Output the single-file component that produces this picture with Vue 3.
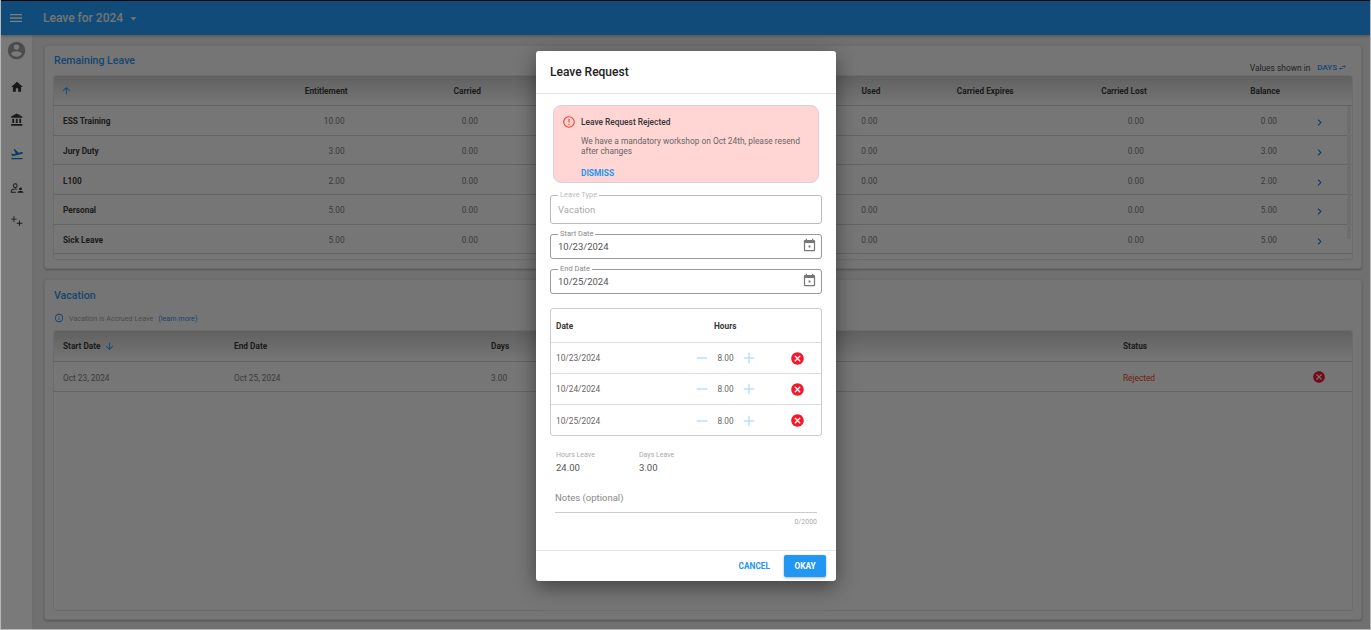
<script setup>
const icons = {
  menu: 'M3,6H21V8H3V6M3,11H21V13H3V11M3,16H21V18H3V16Z',
  account: 'M12,19.2C9.5,19.2 7.29,17.92 6,16C6.03,14 10,12.9 12,12.9C14,12.9 17.97,14 18,16C16.71,17.92 14.5,19.2 12,19.2M12,5A3,3 0 0,1 15,8A3,3 0 0,1 12,11A3,3 0 0,1 9,8A3,3 0 0,1 12,5M12,2A10,10 0 0,0 2,12A10,10 0 0,0 12,22A10,10 0 0,0 22,12C22,6.47 17.5,2 12,2Z',
  home: 'M10,20V14H14V20H19V12H22L12,3L2,12H5V20H10Z',
  bank: 'M11.5,1L2,6V8H21V6M16,10V17H19V10M2,22H21V19H2M10,10V17H13V10M4,10V17H7V10H4Z',
  plane: 'M2.5,19H21.5V21H2.5V19M22.07,9.64C21.86,8.84 21.03,8.36 20.23,8.58L14.92,10L8,3.57L6.09,4.08L10.23,11.25L5.26,12.58L3.29,11.04L1.84,11.43L3.66,14.59L4.43,15.92L6.03,15.5L11.34,14.07L15.69,12.91L21,11.5C21.81,11.26 22.28,10.44 22.07,9.64Z',
  up: 'M13,20H11V8L5.5,13.5L4.08,12.08L12,4.16L19.92,12.08L18.5,13.5L13,8V20Z',
  down: 'M11,4H13V16L18.5,10.5L19.92,11.92L12,19.84L4.08,11.92L5.5,10.5L11,16V4Z',
  chevron: 'M8.59,16.58L13.17,12L8.59,7.41L10,6L16,12L10,18L8.59,16.58Z',
  close: 'M12,2C17.53,2 22,6.47 22,12C22,17.53 17.53,22 12,22C6.47,22 2,17.53 2,12C2,6.47 6.47,2 12,2M15.59,7L12,10.59L8.41,7L7,8.41L10.59,12L7,15.59L8.41,17L12,13.41L15.59,17L17,15.59L13.41,12L17,8.41L15.59,7Z',
  alert: 'M11,15H13V17H11V15M11,7H13V13H11V7M12,2C6.47,2 2,6.5 2,12A10,10 0 0,0 12,22A10,10 0 0,0 22,12A10,10 0 0,0 12,2M12,20A8,8 0 0,1 4,12A8,8 0 0,1 12,4A8,8 0 0,1 20,12A8,8 0 0,1 12,20Z',
  calendar: 'M10.5,12H13.5V15H10.5M19,19H5V8H19M19,3H18V1H16V3H8V1H6V3H5C3.89,3 3,3.9 3,5V19A2,2 0 0,0 5,21H19A2,2 0 0,0 21,19V5A2,2 0 0,0 19,3Z',
  info: 'M11,9H13V7H11M12,20C7.59,20 4,16.41 4,12C4,7.59 7.59,4 12,4C16.41,4 20,7.59 20,12C20,16.41 16.41,20 12,20M12,2A10,10 0 0,0 2,12A10,10 0 0,0 12,22A10,10 0 0,0 22,12A10,10 0 0,0 12,2M11,17H13V11H11V17Z',
  caret: 'M7,10L12,15L17,10H7Z',
  plus: 'M19,13H13V19H11V13H5V11H11V5H13V11H19V13Z',
  minus: 'M19,13H5V11H19V13Z',
  swap: 'M21,9L17,5V8H10V10H17V13M7,11L3,15L7,19V16H14V14H7V11Z',
  people: 'M9,4A4,4 0 0,1 13,8A4,4 0 0,1 9,12A4,4 0 0,1 5,8A4,4 0 0,1 9,4M9,5.6A2.4,2.4 0 0,0 6.6,8A2.4,2.4 0 0,0 9,10.4A2.4,2.4 0 0,0 11.4,8A2.4,2.4 0 0,0 9,5.6M9,13C10,13 11.2,13.15 12.3,13.5L11.6,15C10.8,14.75 9.9,14.6 9,14.6C6.3,14.6 3.1,15.9 3,16.5V18.4H10V20H1.4V16.5C1.4,14.2 6.3,13 9,13M18,11A2.5,2.5 0 0,1 20.5,13.5A2.5,2.5 0 0,1 18,16A2.5,2.5 0 0,1 15.5,13.5A2.5,2.5 0 0,1 18,11M18,17C20.2,17 23,18 23,19V20H13V19C13,18 15.8,17 18,17Z',
  adjust: 'M6,4H7.5V8H11.5V9.5H7.5V13.5H6V9.5H2V8H6V4M15.5,11H17V15H21V16.5H17V20.5H15.5V16.5H11.5V15H15.5V11Z',
}

const navItems = [
  { icon: 'account', big: true },
  { icon: 'home' },
  { icon: 'bank' },
  { icon: 'plane', active: true },
  { icon: 'people' },
  { icon: 'adjust' },
]

// 中间两列被弹窗挡住了，留空
const leaveRows = [
  { name: 'ESS Training', vals: ['10.00', '0.00', '', '', '0.00', '', '0.00', '0.00'] },
  { name: 'Jury Duty', vals: ['3.00', '0.00', '', '', '0.00', '', '0.00', '3.00'] },
  { name: 'L100', vals: ['2.00', '0.00', '', '', '0.00', '', '0.00', '2.00'] },
  { name: 'Personal', vals: ['5.00', '0.00', '', '', '0.00', '', '0.00', '5.00'] },
  { name: 'Sick Leave', vals: ['5.00', '0.00', '', '', '0.00', '', '0.00', '5.00'] },
]
const leaveCols = ['Entitlement', 'Carried', '', '', 'Used', 'Carried Expires', 'Carried Lost', 'Balance']

const days = ['10/23/2024', '10/24/2024', '10/25/2024']
</script>

<template>
  <div class="page">
    <header class="topbar">
      <svg class="ic menu-ic" viewBox="0 0 24 24"><path :d="icons.menu" /></svg>
      <span class="top-title">Leave for 2024</span>
      <svg class="ic caret-ic" viewBox="0 0 24 24"><path :d="icons.caret" /></svg>
    </header>

    <div class="body">
      <nav class="rail">
        <svg
          v-for="n in navItems"
          :key="n.icon"
          class="ic nav-ic"
          :class="{ big: n.big, active: n.active }"
          viewBox="0 0 24 24"
        ><path :d="icons[n.icon]" /></svg>
      </nav>

      <main class="content">
        <section class="card card-top">
          <div class="card-head">
            <h2 class="card-title">Remaining Leave</h2>
            <div class="unit">
              Values shown in
              <span class="unit-val">DAYS<svg class="ic swap-ic" viewBox="0 0 24 24"><path :d="icons.swap" /></svg></span>
            </div>
          </div>
          <div class="table leave-table">
            <div class="thead leave-grid">
              <div class="cell"><svg class="ic sort-ic" viewBox="0 0 24 24"><path :d="icons.up" /></svg></div>
              <div v-for="(c, i) in leaveCols" :key="i" class="cell num">{{ c }}</div>
              <div class="cell"></div>
            </div>
            <div v-for="r in leaveRows" :key="r.name" class="row leave-grid">
              <div class="cell name">{{ r.name }}</div>
              <div v-for="(v, i) in r.vals" :key="i" class="cell num val">{{ v }}</div>
              <div class="cell chev"><svg class="ic chev-ic" viewBox="0 0 24 24"><path :d="icons.chevron" /></svg></div>
            </div>
            <div class="scrollbar"></div>
          </div>
        </section>

        <section class="card card-bottom">
          <h2 class="card-title vac-title">Vacation</h2>
          <div class="accrued">
            <svg class="ic info-ic" viewBox="0 0 24 24"><path :d="icons.info" /></svg>
            <span>Vacation is Accrued Leave</span>
            <a class="learn">(learn more)</a>
          </div>
          <div class="table vac-table">
            <div class="thead vac-grid">
              <div class="cell first">Start Date<svg class="ic sort-ic down" viewBox="0 0 24 24"><path :d="icons.down" /></svg></div>
              <div class="cell">End Date</div>
              <div class="cell">Days</div>
              <div class="cell">Status</div>
              <div class="cell"></div>
            </div>
            <div class="row vac-grid">
              <div class="cell first val">Oct 23, 2024</div>
              <div class="cell val">Oct 25, 2024</div>
              <div class="cell val">3.00</div>
              <div class="cell rejected">Rejected</div>
              <div class="cell"><svg class="ic del-ic" viewBox="0 0 24 24"><path :d="icons.close" /></svg></div>
            </div>
          </div>
        </section>
      </main>
    </div>

    <div class="overlay">
      <div class="dialog">
        <div class="dlg-title">Leave Request</div>
        <div class="dlg-body">
          <div class="alert">
            <svg class="ic alert-ic" viewBox="0 0 24 24"><path :d="icons.alert" /></svg>
            <div class="alert-main">
              <div class="alert-title">Leave Request Rejected</div>
              <div class="alert-text">We have a mandatory workshop on Oct 24th, please resend after changes</div>
              <div class="dismiss">DISMISS</div>
            </div>
          </div>

          <fieldset class="field disabled">
            <legend>Leave Type</legend>
            <span>Vacation</span>
          </fieldset>
          <fieldset class="field">
            <legend>Start Date</legend>
            <span>10/23/2024</span>
            <svg class="ic cal-ic" viewBox="0 0 24 24"><path :d="icons.calendar" /></svg>
          </fieldset>
          <fieldset class="field">
            <legend>End Date</legend>
            <span>10/25/2024</span>
            <svg class="ic cal-ic" viewBox="0 0 24 24"><path :d="icons.calendar" /></svg>
          </fieldset>

          <div class="hours-table">
            <div class="h-row h-head">
              <div class="h-date">Date</div>
              <div class="h-hours">Hours</div>
            </div>
            <div v-for="d in days" :key="d" class="h-row">
              <div class="h-date">{{ d }}</div>
              <div class="stepper">
                <svg class="ic step-ic" viewBox="0 0 24 24"><path :d="icons.minus" /></svg>
                <span class="h-val">8.00</span>
                <svg class="ic step-ic" viewBox="0 0 24 24"><path :d="icons.plus" /></svg>
              </div>
              <svg class="ic x-ic" viewBox="0 0 24 24"><path :d="icons.close" /></svg>
            </div>
          </div>

          <div class="totals">
            <div class="total t-hours">
              <div class="t-label">Hours Leave</div>
              <div class="t-val">24.00</div>
            </div>
            <div class="total">
              <div class="t-label">Days Leave</div>
              <div class="t-val">3.00</div>
            </div>
          </div>

          <div class="notes">Notes (optional)</div>
          <div class="counter">0/2000</div>
        </div>
        <div class="dlg-foot">
          <button class="btn-text">CANCEL</button>
          <button class="btn-ok">OKAY</button>
        </div>
      </div>
    </div>
  </div>
</template>

<style>
html,
body {
  margin: 0;
  background: #fff;
}
</style>

<style scoped>
.page {
  position: relative;
  width: 1371px;
  height: 630px;
  box-sizing: border-box;
  overflow: hidden;
  background: #e0e0e0;
  border: 1px solid #b8b8b8;
  border-top: none;
  font-family: Roboto, 'Liberation Sans', sans-serif;
  color: #212121;
  display: flex;
  flex-direction: column;
}
.ic {
  display: block;
  fill: currentColor;
  flex: none;
}
.topbar {
  height: 35px;
  flex: none;
  box-sizing: border-box;
  border-top: 1px solid #111;
  background: #2196f3;
  color: #fff;
  display: flex;
  align-items: center;
  padding-left: 7px;
  box-shadow: 0 1px 3px rgba(0, 0, 0, 0.3);
  position: relative;
}
.menu-ic {
  width: 16px;
  height: 16px;
}
.top-title {
  margin-left: 19px;
  font-size: 12px;
  font-weight: 500;
  color: #e8e8e8;
}
.caret-ic {
  width: 15px;
  height: 15px;
  margin-left: 3px;
  color: #e8e8e8;
}
.body {
  flex: 1;
  display: flex;
  min-height: 0;
}
.rail {
  width: 32px;
  flex: none;
  background: #f4f4f4;
  border-right: 1px solid #dcdcdc;
  box-sizing: border-box;
  display: flex;
  flex-direction: column;
  align-items: center;
  padding-top: 5px;
  gap: 19.7px;
  color: #333;
}
.nav-ic {
  width: 14px;
  height: 14px;
}
.nav-ic.big {
  width: 21px;
  height: 21px;
  color: #999;
  margin-bottom: -1px;
}
.nav-ic.active {
  color: #1976d2;
}
.content {
  flex: 1;
  padding: 10px 8px 9px 11px;
  display: flex;
  flex-direction: column;
  gap: 10px;
  min-width: 0;
}
.card {
  background: #ebebeb;
  border: 1px solid #d8d8d8;
  border-radius: 3px;
  box-shadow: 0 1px 2px rgba(0, 0, 0, 0.25);
  box-sizing: border-box;
  padding: 0 8px 8px;
}
.card-top {
  height: 224px;
}
.card-bottom {
  flex: 1;
}
.card-head {
  height: 29px;
  display: flex;
  justify-content: space-between;
}
.card-title {
  margin: 0;
  font-size: 10.6px;
  font-weight: 500;
  color: #2a8ae0;
  padding: 8px 0 0 1px;
  line-height: 13px;
}
.unit {
  font-size: 8.4px;
  color: #444;
  align-self: flex-end;
  line-height: 10px;
  margin-bottom: 2.5px;
  margin-right: 6px;
  display: flex;
  gap: 7px;
}
.unit-val {
  color: #2a8ae0;
  font-weight: 500;
  font-size: 8px;
  display: flex;
  align-items: center;
  gap: 1px;
}
.swap-ic {
  width: 9px;
  height: 9px;
}
.table {
  position: relative;
  border: 1px solid #d8d8d8;
  border-radius: 3px;
  box-sizing: border-box;
  background: #ececec;
  overflow: hidden;
}
.leave-table {
  height: 185px;
}
.scrollbar {
  position: absolute;
  right: 1px;
  top: 30px;
  width: 4px;
  height: 133px;
  background: #dcdcdc;
}
.thead {
  height: 30px;
  background: linear-gradient(#c2c2c2, #ececec);
  border-bottom: 1px solid #c4c4c4;
  box-sizing: border-box;
  font-size: 8.3px;
  font-weight: 700;
  color: #383838;
}
.row {
  height: 29.7px;
  box-sizing: border-box;
  padding-top: 2px;
  border-bottom: 1px solid #c8c8c8;
  font-size: 8.3px;
}
.leave-grid {
  display: grid;
  grid-template-columns: 160.5px repeat(8, 133.2px) 1fr;
  align-items: center;
}
.leave-grid .cell:first-child {
  padding-left: 7px;
}
.leave-grid .cell.name {
  padding-left: 9px;
  font-weight: 700;
  color: #383838;
}
.cell.num {
  text-align: right;
}
.cell.val {
  color: #777;
}
.cell.num.val {
  padding-right: 3px;
}
.chev {
  display: flex;
  padding-left: 33px;
}
.chev-ic {
  width: 13px;
  height: 13px;
  color: #1976d2;
  margin-top: 3px;
}
.sort-ic {
  width: 11px;
  height: 11px;
  color: #2196f3;
}
.sort-ic.down {
  margin-left: 3px;
}
.vac-title {
  padding-top: 9px;
}
.accrued {
  display: flex;
  align-items: center;
  height: 14px;
  margin-top: 9px;
  font-size: 7.2px;
  color: #999;
  gap: 5px;
}
.info-ic {
  width: 10px;
  height: 10px;
  color: #2a8ae0;
  margin-left: 1px;
}
.learn {
  color: #2a8ae0;
}
.vac-table {
  height: 281px;
  margin-top: 5px;
}
.vac-table .thead {
  height: 31px;
}
.vac-table .row {
  height: 30px;
}
.vac-grid {
  display: grid;
  grid-template-columns: 180px 257px 632px 189px 1fr;
  align-items: center;
}
.vac-grid .first {
  padding-left: 9px;
  display: flex;
  align-items: center;
}
.rejected {
  color: #e53935;
}
.del-ic {
  width: 14px;
  height: 14px;
  color: #e8192c;
  margin-top: -2px;
}
.overlay {
  position: absolute;
  inset: 0;
  background: rgba(0, 0, 0, 0.5);
}
.dialog {
  position: absolute;
  left: 535px;
  top: 51px;
  width: 300px;
  height: 530px;
  background: #fff;
  border-radius: 3px;
  box-shadow: 0 6px 20px rgba(0, 0, 0, 0.45);
  display: flex;
  flex-direction: column;
}
.dlg-title {
  height: 42.5px;
  flex: none;
  box-sizing: border-box;
  border-bottom: 1px solid #e6e6e6;
  padding: 13px 14px 0;
  font-size: 12px;
  line-height: 16px;
  font-weight: 500;
}
.dlg-body {
  flex: 1;
  padding: 11.5px 14px 0;
  min-height: 0;
}
.alert {
  margin: 0 3px;
  height: 78px;
  box-sizing: border-box;
  background: #ffd6d3;
  border: 1px solid #d8d2dc;
  border-radius: 8px;
  display: flex;
  padding: 9px 8px;
  gap: 5px;
  font-size: 8.35px;
  line-height: 10px;
}
.alert-ic {
  width: 14px;
  height: 14px;
  color: #f44336;
}
.alert-title {
  font-weight: 500;
  color: #333;
  margin-top: 2px;
}
.alert-text {
  color: #666;
  margin-top: 9px;
}
.dismiss {
  color: #2196f3;
  font-weight: 700;
  margin-top: 12px;
}
.field {
  margin: 4px 0 0;
  padding: 0 4px 0 7px;
  min-inline-size: 0;
  height: 29px;
  box-sizing: border-box;
  border: 1px solid #999;
  border-radius: 3px;
  display: flex;
  align-items: center;
  justify-content: space-between;
  font-size: 9.5px;
  color: #555;
}
.field + .field {
  margin-top: 6px;
}
.field legend {
  font-size: 7.5px;
  line-height: 8px;
  color: #888;
  padding: 0 2px;
}
.field span {
  margin-bottom: 4px;
}
.field.disabled {
  margin-top: 8px;
  height: 33px;
  border-color: #bbb;
  color: #aaa;
}
.field.disabled legend {
  color: #bbb;
}
.cal-ic {
  width: 15px;
  height: 15px;
  color: #777;
  margin-bottom: 5px;
}
.hours-table {
  margin-top: 14px;
  border: 1px solid #ccc;
  border-radius: 3px;
  box-sizing: border-box;
  height: 128px;
}
.h-row {
  height: 31px;
  box-sizing: border-box;
  border-bottom: 1px solid #ddd;
  display: flex;
  align-items: center;
  font-size: 8.3px;
  color: #666;
  padding-left: 5px;
}
.h-row:last-child {
  border-bottom: none;
}
.h-head {
  height: 34px;
  font-weight: 700;
  color: #383838;
}
.h-date {
  width: 137px;
}
.h-hours {
  margin-left: 21px;
}
.stepper {
  width: 65px;
  display: flex;
  align-items: center;
  justify-content: space-between;
  color: #bbdefb;
}
.h-val {
  color: #666;
}
.step-ic {
  width: 18px;
  height: 18px;
}
.x-ic {
  width: 15px;
  height: 15px;
  color: #f01a2c;
  margin-left: 31.5px;
}
.totals {
  display: flex;
  margin-top: 14px;
  padding-left: 6px;
}
.total.t-hours {
  width: 83px;
}
.t-label {
  font-size: 7px;
  line-height: 10px;
  color: #aaa;
}
.t-val {
  font-size: 9.5px;
  line-height: 12px;
  margin-top: 2px;
  color: #555;
}
.notes {
  margin: 18px 5px 0;
  height: 21px;
  box-sizing: border-box;
  border-bottom: 1px solid #ccc;
  font-size: 9.5px;
  line-height: 12px;
  color: #888;
}
.counter {
  text-align: right;
  margin: 5px 5px 0;
  font-size: 7px;
  color: #aaa;
}
.dlg-foot {
  height: 31px;
  flex: none;
  box-sizing: border-box;
  border-top: 1px solid #e6e6e6;
  display: flex;
  align-items: center;
  justify-content: flex-end;
  padding-right: 10px;
  gap: 14px;
}
.btn-text,
.btn-ok {
  border: none;
  font-family: inherit;
  font-size: 8.3px;
  font-weight: 700;
  cursor: pointer;
}
.btn-text {
  background: none;
  color: #2196f3;
  padding: 0;
}
.btn-ok {
  width: 42px;
  height: 22px;
  background: #2196f3;
  color: #fff;
  border-radius: 2px;
  box-shadow: 0 1px 3px rgba(0, 0, 0, 0.3);
}
</style>
